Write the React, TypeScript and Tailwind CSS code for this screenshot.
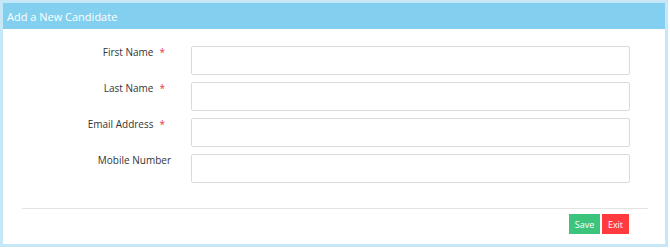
import React from "react";

const fields = [
  { label: "First Name", required: true },
  { label: "Last Name", required: true },
  { label: "Email Address", required: true },
  { label: "Mobile Number", required: false },
];

export default function App() {
  return (
    <div className="w-[670px] h-[250px] bg-white font-['Open_Sans',sans-serif]">
      <div className="w-[668px] h-[247px] border-[3px] border-[#c5e7f7] flex flex-col">
        <div className="h-[26px] bg-[#82cfef] flex items-center px-[4px]">
          <span className="text-[11px] text-white leading-none">Add a New Candidate</span>
        </div>
        <div className="flex-1 flex flex-col pt-[17px]">
          <div className="flex flex-col gap-[7px]">
            {fields.map((f) => (
              <div key={f.label} className="flex items-start">
                <div className="w-[168px] flex justify-end">
                  <span className="text-[10px] text-[#333] leading-[12px] font-medium">{f.label}</span>
                  {f.required ? (
                    <span className="text-[10px] text-[#e53935] leading-[12px] ml-[6px] mr-[6px]">*</span>
                  ) : null}
                </div>
                <input
                  type="text"
                  className="ml-[20px] w-[439px] h-[29px] border border-[#d7dbe0] rounded-[2px] bg-white outline-none"
                />
              </div>
            ))}
          </div>
          <div className="mt-[25px] ml-[19px] mr-[17px] border-t border-[#e4e4e4]" />
          <div className="flex justify-end gap-[2px] mt-[5px] pr-[36px]">
            <button className="h-[20px] w-[31px] bg-[#3cc47c] text-white text-[9px] leading-none">Save</button>
            <button className="h-[20px] w-[27px] bg-[#ff3b3f] text-white text-[9px] leading-none">Exit</button>
          </div>
        </div>
      </div>
    </div>
  );
}
